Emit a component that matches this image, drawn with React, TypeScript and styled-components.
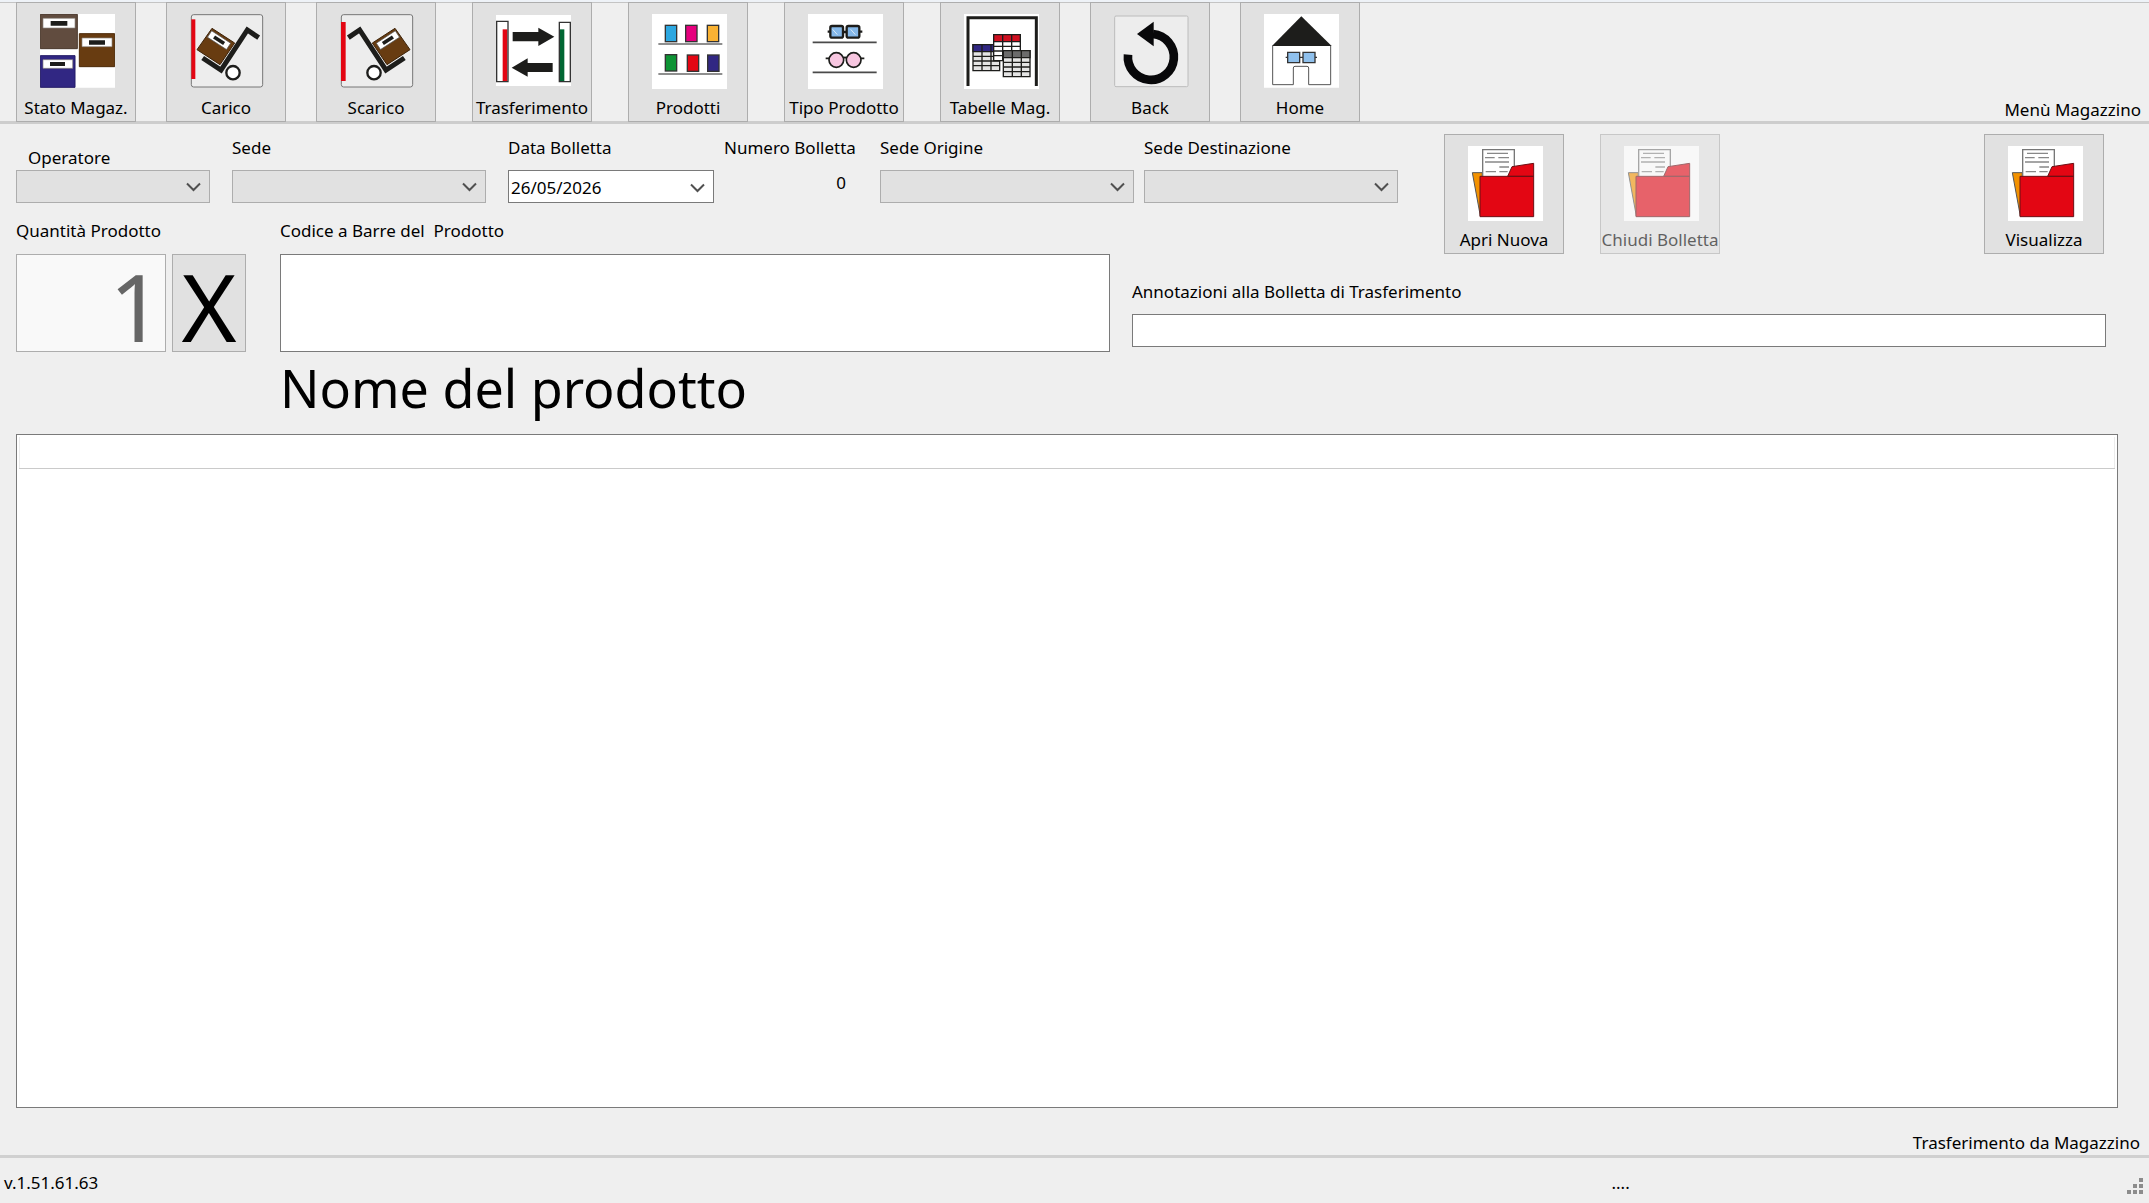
import React, { useState } from "react";
import styled, { createGlobalStyle } from "styled-components";

const GlobalStyle = createGlobalStyle`
  *, *::before, *::after { box-sizing: border-box; }
  body {
    margin: 0;
    background: #efefef;
    color: #000;
    font: 17px/24px "Noto Sans", "Open Sans", sans-serif;
  }
  button, input, select { font: inherit; color: inherit; margin: 0; border-radius: 0; }
`;

/* ---------- layout ---------- */

const Window = styled.div`
  display: flex;
  flex-direction: column;
  min-height: 100vh;
`;

const Toolbar = styled.header`
  display: flex;
  align-items: flex-end;
  gap: 36px;
  height: 124px;
  padding: 0 8px 0 16px;
  border-top: 2px solid #eef2f7;
  border-bottom: 3px solid #cdcdcd;
  box-shadow: inset 0 1px #c4c4c4;
  > * { margin-bottom: -1px; }
`;

const ToolGroup = styled.div`
  display: flex;
  gap: 30px;
`;

const ToolbarTitle = styled.div`
  margin-left: auto;
  white-space: nowrap;
`;

const Content = styled.main`
  flex: 1;
  display: flex;
  flex-direction: column;
  padding: 10px 31px 0 16px;
`;

const Form = styled.div`
  display: grid;
  grid-template-columns: 1094px 266px minmax(0, 1fr);
  grid-template-rows: 85px 35px auto;
  column-gap: 22px;
  padding-right: 12px;
`;

const FieldsRow = styled.div`
  grid-column: 1 / 3;
  grid-row: 1;
  display: flex;
  align-items: flex-start;
`;

const Actions = styled.div`
  grid-column: 3;
  grid-row: 1 / 3;
  display: flex;
  align-items: flex-start;
  gap: 36px;
  padding: 0 2px 0 24px;
`;

const PushRight = styled.div`
  margin-left: auto;
`;

const Entry = styled.div`
  grid-column: 1;
  grid-row: 2 / 4;
  display: grid;
  grid-template-columns: 150px 74px minmax(0, 1fr);
  grid-template-rows: 35px 98px;
  column-gap: 6px;
`;

const Notes = styled.div`
  grid-column: 2 / 4;
  grid-row: 3;
  display: flex;
  flex-direction: column;
  gap: 10px;
  padding-top: 26px;
`;

/* ---------- controls ---------- */

const Label = styled.label`
  white-space: pre;
`;

const FieldLabel = styled(Label)<{ $indent?: boolean }>`
  padding: ${(p) => (p.$indent ? "12px 0 0 12px" : "2px 0 0")};
`;

const EntryLabel = styled(Label)<{ $wide?: boolean }>`
  grid-row: 1;
  grid-column: ${(p) => (p.$wide ? "3" : "1 / 3")};
  padding-left: ${(p) => (p.$wide ? "28px" : "0")};
`;

const Field = styled.div<{ $width: number; $gap: number }>`
  display: flex;
  flex-direction: column;
  justify-content: space-between;
  width: ${(p) => p.$width}px;
  height: 69px;
  margin-right: ${(p) => p.$gap}px;
`;

const SelectBox = styled.div`
  display: grid;
  align-items: center;
  > * { grid-area: 1 / 1; }
  > svg { justify-self: end; margin-right: 9px; pointer-events: none; }
`;

const Select = styled.select`
  appearance: none;
  height: 33px;
  width: 100%;
  padding: 0 30px 0 4px;
  background: #e1e1e1;
  border: 1px solid #adadad;
  opacity: 1;
`;

const DateBox = styled.div`
  display: flex;
  height: 33px;
  background: #fff;
  border: 1px solid #7a7a7a;
`;

const DateInput = styled.input`
  flex: 1;
  min-width: 0;
  padding: 3px 0 0 2px;
  border: 0;
  background: none;
`;

const DropButton = styled.button`
  width: 32px;
  padding: 0;
  border: 0;
  background: none;
`;

const NumberOutput = styled.output`
  align-self: flex-end;
  margin: 0 10px 8px 0;
`;

const TextInput = styled.input<{ $tall?: boolean }>`
  width: 100%;
  height: ${(p) => (p.$tall ? 98 : 33)}px;
  padding: 0 6px;
  background: #fff;
  border: 1px solid #7a7a7a;
  font-size: ${(p) => (p.$tall ? 94 : 17)}px;
`;

const BarcodeCell = styled.div`
  grid-column: 3;
  padding-left: 28px;
`;

const QuantityInput = styled.input`
  grid-column: 1;
  width: 100%;
  height: 98px;
  padding: 6px 2px 0;
  background: #f9f9f9;
  border: 1px solid #adadad;
  color: #666;
  font-size: 94px;
  line-height: 80px;
  text-align: right;
`;

const TimesButton = styled.button`
  grid-column: 2;
  padding: 6px 0 0;
  background: #e1e1e1;
  border: 1px solid #adadad;
  font-size: 94px;
  line-height: 80px;
`;

const ToolButton = styled.button`
  display: flex;
  flex-direction: column;
  align-items: center;
  flex: none;
  width: 120px;
  height: 120px;
  padding: 11px 0 0;
  background: #e1e1e1;
  border: 1px solid #adadad;
  white-space: nowrap;
  > svg { flex: none; width: 75px; height: 75px; margin: 0 0 7px 3px; }
  &:disabled { opacity: 0.6; }
`;

const ProductName = styled.h1`
  margin: 0;
  padding: 0 0 2px 264px;
  font-size: 52px;
  line-height: 72px;
  font-weight: 400;
`;

const GridPanel = styled.section`
  flex: 1;
  margin-top: 8px;
  padding: 2px;
  background: #fff;
  border: 1px solid #7a7a7a;
`;

const GridTable = styled.table`
  width: 100%;
  border-collapse: collapse;
  th {
    height: 31px;
    padding: 0;
    border: 1px solid #ececec;
    border-top: 0;
    border-bottom-color: #cacaca;
  }
`;

const SectionTitle = styled.div`
  padding: 23px 9px 0;
  text-align: right;
`;

const StatusBar = styled.footer`
  display: flex;
  align-items: center;
  height: 48px;
  padding: 4px 5px 0 4px;
  border-top: 3px solid #d0d0d0;
`;

const Version = styled.span`
  flex: 1609;
`;

const Progress = styled.span`
  flex: 516;
`;

const Grip = styled.svg`
  align-self: flex-end;
  width: 17px;
  height: 17px;
  margin-bottom: 8px;
`;

/* ---------- drawings ---------- */

const INK = "#1d1d1b";

const Chevron = () => (
  <svg width="15" height="10" viewBox="0 0 15 10" fill="none" stroke="#505050" strokeWidth="2">
    <path d="M1 1.5 7.5 8 14 1.5" />
  </svg>
);

const Drawing = ({ children }: { children: React.ReactNode }) => (
  <svg viewBox="0 0 225 225" aria-hidden="true">{children}</svg>
);

const StockIcon = () => (
  <Drawing>
    <path fill="#fff" d="M0 0h225v221H0z" />
    <path fill="#614c3f" stroke="#4a382c" strokeWidth="3" d="M1 1h111v103H1z" />
    <path fill="#683c11" stroke="#4d2a08" strokeWidth="3" d="M118 59h106v99H118z" />
    <path fill="#312783" stroke="#231b66" strokeWidth="3" d="M1 125h104v95H1z" />
    <path fill="#fff" stroke="#8d8580" strokeWidth="2" d="M9 13h96v29H9zM126 72h90v26h-90zM9 137h89v26H9z" />
    <path fill={INK} d="M32 21h50v14H32zM147 79h48v13h-48zM30 144h45v12H30z" />
  </Drawing>
);

const Frame = () => (
  <rect x="4" y="2" width="214" height="217" rx="7" fill="#ededed" stroke="#777" strokeWidth="3" />
);

const HandTruck = () => (
  <g>
    <path fill="#683c11" stroke="#3d2309" strokeWidth="3" d="M66 43 134 87 90 152 21 107z" />
    <g transform="rotate(33 87 79)">
      <path fill="#fff" stroke="#555" strokeWidth="2" d="M53 67h68v23H53z" />
      <path fill={INK} d="M69 73h36v11H69z" />
    </g>
    <path fill="none" stroke={INK} strokeWidth="15" d="M206 71 172 48 93 168 38 132" />
    <circle cx="129" cy="176" r="20" fill="#fff" stroke={INK} strokeWidth="7" />
  </g>
);

const LoadIcon = () => (
  <Drawing>
    <Frame />
    <path fill="#e30613" d="M4 16h12v179H4z" />
    <HandTruck />
  </Drawing>
);

const UnloadIcon = () => (
  <Drawing>
    <Frame />
    <path fill="#e30613" d="M3 24h14v177H3z" />
    <g transform="translate(231 0) scale(-1 1)"><HandTruck /></g>
  </Drawing>
);

const TransferIcon = () => (
  <Drawing>
    <path fill="#fff" d="M0 3h225v213H0z" />
    <path fill="#e30613" d="M20 46h14v156H20z" />
    <path fill="#006633" d="M191 46h14v156h-14z" />
    <path fill="none" stroke="#333" strokeWidth="4" d="M2 22h34v181H2zM190 25h33v178h-33z" />
    <path fill={INK} d="M50 54h77V41l48 27-48 28V82H50zM170 147H95v-14l-48 28 48 27v-14h75z" />
  </Drawing>
);

const jars: [number, number, string][] = [
  [40, 34, "#2ca7e0"], [101, 34, "#e6007e"], [166, 34, "#f9b233"],
  [40, 122, "#0d9334"], [106, 123, "#e30613"], [167, 123, "#312783"],
];

const ProductsIcon = () => (
  <Drawing>
    <path fill="#fff" d="M0 0h225v225H0z" />
    {jars.map(([x, y, fill]) => (
      <rect key={fill} x={x} y={y} width="34" height="49" fill={fill} stroke="#333" strokeWidth="4" />
    ))}
    <path stroke="#6a6a6a" strokeWidth="5" d="M19 90h192M19 180h192" />
  </Drawing>
);

const ProductTypeIcon = () => (
  <Drawing>
    <path fill="#fff" d="M0 0h225v225H0z" />
    <g fill="#86b9ea" stroke={INK} strokeWidth="7">
      <rect x="67" y="36" width="38" height="35" rx="5" />
      <rect x="116" y="36" width="38" height="35" rx="5" />
      <path d="M59 53h8M105 54h11M154 53h9" />
    </g>
    <path stroke="#dcebf8" strokeWidth="3" d="m74 46 14 16M128 46l14 16" />
    <g fill="#f7c6e0" stroke={INK} strokeWidth="5">
      <circle cx="85" cy="138" r="22" />
      <circle cx="137" cy="138" r="22" />
      <path d="M53 133h11M106 133q5-5 10 0M158 133h11" fill="none" />
    </g>
    <path stroke="#4a4a4a" strokeWidth="5" d="M14 85h192M14 175h192" />
  </Drawing>
);

const MiniTable = ({ x, y, head, body = "#fff" }: { x: number; y: number; head: string; body?: string }) => (
  <g transform={`translate(${x} ${y})`} stroke={INK} strokeWidth="4">
    <path fill={body} d="M0 0h80v78H0z" />
    <path fill={head} d="M0 0h80v21H0z" />
    <path fill="none" d="M27 0v78M54 0v78M0 35h80M0 49h80M0 63h80" />
  </g>
);

const TablesIcon = () => (
  <Drawing>
    <path fill="#fff" d="M0 0h225v225H0z" />
    <path fill="none" stroke={INK} strokeWidth="9" d="M12 216V11h205v205" />
    <MiniTable x={27} y={92} head="#312783" body="#e4e4e4" />
    <MiniTable x={89} y={62} head="#d01020" />
    <MiniTable x={118} y={110} head="#6b6b6b" body="#e4e4e4" />
  </Drawing>
);

const BackIcon = () => (
  <Drawing>
    <rect x="2" y="6" width="220" height="212" rx="4" fill="#ededed" stroke="#bcbcbc" strokeWidth="3" />
    <path fill="none" stroke="#08080a" strokeWidth="26" d="M42 122A69 69 0 1 0 117 60" />
    <path fill="#08080a" d="M69 60 119 23v74z" />
  </Drawing>
);

const HomeIcon = () => (
  <Drawing>
    <path fill="#fff" d="M0 0h225v221H0z" />
    <path fill="none" stroke="#555" strokeWidth="3" d="M26 95v117h62v-50q0-5 5-5h36q5 0 5 5v50h66V95" />
    <path fill={INK} d="M112 7 203 96H24z" />
    <g fill="#8fc0ec" stroke="#333" strokeWidth="4">
      <path d="M71 115h36v31H71zM117 115h36v31h-36zM65 130h6M107 130h10M153 130h6" />
    </g>
  </Drawing>
);

const FolderIcon = () => (
  <Drawing>
    <path fill="#fff" d="M0 0h225v225H0z" />
    <path fill="#f39200" stroke="#555" strokeWidth="3" d="M13 80h30l-6 130z" />
    <path fill="#fff" stroke="#777" strokeWidth="4" d="M44 11h95v90H44z" />
    <path stroke="#888" strokeWidth="4" d="M57 22h63M51 35h29M91 35h32M51 48h72M94 63h29M53 77h31M94 77h25" />
    <path fill="#e30613" stroke="#6b1015" strokeWidth="3" d="m119 91 13-29 65-10v39zM36 91h161v121H36z" />
  </Drawing>
);

/* ---------- page ---------- */

const ToolItem = ({ label, icon, disabled }: { label: string; icon: React.ReactNode; disabled?: boolean }) => (
  <ToolButton type="button" disabled={disabled}>
    {icon}
    {label}
  </ToolButton>
);

const SelectField = ({ id, label, width, gap, indent }: {
  id: string; label: string; width: number; gap: number; indent?: boolean;
}) => (
  <Field $width={width} $gap={gap}>
    <FieldLabel htmlFor={id} $indent={indent}>{label}</FieldLabel>
    <SelectBox>
      <Select id={id} disabled />
      <Chevron />
    </SelectBox>
  </Field>
);

export default function App() {
  const [date, setDate] = useState("26/05/2026");

  return (
    <Window>
      <GlobalStyle />
      <Toolbar>
        <ToolGroup>
          <ToolItem label="Stato Magaz." icon={<StockIcon />} />
          <ToolItem label="Carico" icon={<LoadIcon />} />
          <ToolItem label="Scarico" icon={<UnloadIcon />} />
        </ToolGroup>
        <ToolItem label="Trasferimento" icon={<TransferIcon />} />
        <ToolItem label="Prodotti" icon={<ProductsIcon />} />
        <ToolItem label="Tipo Prodotto" icon={<ProductTypeIcon />} />
        <ToolGroup>
          <ToolItem label="Tabelle Mag." icon={<TablesIcon />} />
          <ToolItem label="Back" icon={<BackIcon />} />
          <ToolItem label="Home" icon={<HomeIcon />} />
        </ToolGroup>
        <ToolbarTitle>Menù Magazzino</ToolbarTitle>
      </Toolbar>

      <Content>
        <Form>
          <FieldsRow>
            <SelectField id="operatore" label="Operatore" width={194} gap={22} indent />
            <SelectField id="sede" label="Sede" width={254} gap={22} />
            <Field $width={206} $gap={10}>
              <FieldLabel htmlFor="data">Data Bolletta</FieldLabel>
              <DateBox>
                <DateInput id="data" value={date} onChange={(e) => setDate(e.target.value)} />
                <DropButton type="button" aria-label="Data Bolletta"><Chevron /></DropButton>
              </DateBox>
            </Field>
            <Field $width={132} $gap={24}>
              <FieldLabel htmlFor="numero">Numero Bolletta</FieldLabel>
              <NumberOutput id="numero">0</NumberOutput>
            </Field>
            <SelectField id="origine" label="Sede Origine" width={254} gap={10} />
            <SelectField id="destinazione" label="Sede Destinazione" width={254} gap={0} />
          </FieldsRow>

          <Actions>
            <ToolItem label="Apri Nuova" icon={<FolderIcon />} />
            <ToolItem label="Chiudi Bolletta" icon={<FolderIcon />} disabled />
            <PushRight>
              <ToolItem label="Visualizza" icon={<FolderIcon />} />
            </PushRight>
          </Actions>

          <Entry>
            <EntryLabel htmlFor="quantita">Quantità Prodotto</EntryLabel>
            <EntryLabel htmlFor="barcode" $wide>{"Codice a Barre del  Prodotto"}</EntryLabel>
            <QuantityInput id="quantita" defaultValue="1" disabled />
            <TimesButton type="button">X</TimesButton>
            <BarcodeCell>
              <TextInput id="barcode" $tall />
            </BarcodeCell>
          </Entry>

          <Notes>
            <Label htmlFor="note">Annotazioni alla Bolletta di Trasferimento</Label>
            <TextInput id="note" />
          </Notes>
        </Form>

        <ProductName>Nome del prodotto</ProductName>

        <GridPanel>
          <GridTable>
            <thead>
              <tr><th /></tr>
            </thead>
            <tbody />
          </GridTable>
        </GridPanel>
      </Content>

      <SectionTitle>Trasferimento da Magazzino</SectionTitle>
      <StatusBar>
        <Version>v.1.51.61.63</Version>
        <Progress>....</Progress>
        <Grip viewBox="0 0 17 17" fill="#8c8c8c" aria-hidden="true">
          <path d="M12 0h4v4h-4zM6 6h4v4H6zM12 6h4v4h-4zM0 12h4v4H0zM6 12h4v4H6zM12 12h4v4h-4z" />
        </Grip>
      </StatusBar>
    </Window>
  );
}
